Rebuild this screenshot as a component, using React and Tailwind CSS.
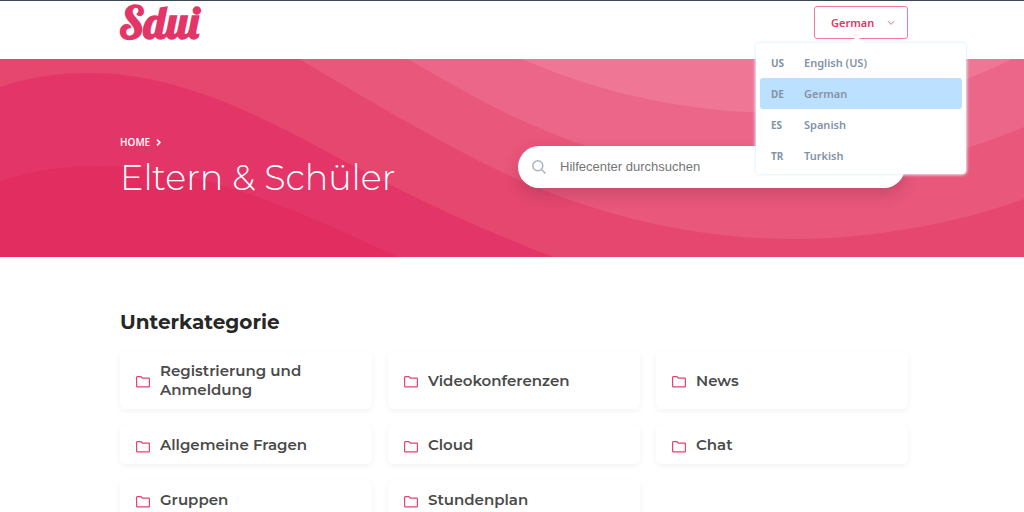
const languages = [
  { code: "US", name: "English (US)" },
  { code: "DE", name: "German", active: true },
  { code: "ES", name: "Spanish" },
  { code: "TR", name: "Turkish" },
];

const categories = [
  "Registrierung und Anmeldung",
  "Videokonferenzen",
  "News",
  "Allgemeine Fragen",
  "Cloud",
  "Chat",
  "Gruppen",
  "Stundenplan",
];

function FolderIcon() {
  return (
    <svg viewBox="0 0 14 12" className="mt-1 h-3 w-3.5 shrink-0" fill="none" stroke="#e4436f" strokeWidth="1.2" strokeLinejoin="round" aria-hidden="true">
      <path d="M.6 10.2V1.3Q.6.7 1.2.7H5L6.6 2.2h6.2q.6 0 .6.6v7.4q0 .6-.6.6H1.2q-.6 0-.6-.6Z" />
    </svg>
  );
}

function Waves() {
  return (
    <svg viewBox="0 0 1024 198" preserveAspectRatio="xMidYMid slice" className="absolute inset-0 h-full w-full" aria-hidden="true">
      <rect width="1024" height="198" fill="#f07696" />
      <path fill="#ec6689" d="M0 0H522C590 30 680 54 780 54C860 54 940 36 1012 0H1024V198H0Z" />
      <path fill="#e9577b" d="M0 0H408C440 19 475 39 512 57C600 98 690 121 785 121C870 121 950 98 1024 68V198H0Z" />
      <path fill="#e6476f" d="M0 0H299C365 39 440 84 512 118C600 157 695 180 792 180C870 180 955 165 1024 140V198H0Z" />
      <path fill="#e33567" d="M0 28C30 18 60 14 88 14C185 14 270 62 350 105C420 142 480 170 553 198H0Z" />
      <path fill="#e22d61" d="M0 122C30 112 65 107 97 107C205 107 305 155 398 198H0Z" />
    </svg>
  );
}

function LanguagePicker() {
  return (
    <div className="relative z-20 font-['Noto_Sans',sans-serif] text-[11px]">
      <button type="button" aria-haspopup="true" aria-expanded="true" className="flex h-[33px] w-[94px] items-center justify-between rounded-[3px] border border-[#ee7d9d] bg-white pt-px pr-3 pl-4 font-semibold text-[#e33567]">
        German
        <svg viewBox="0 0 8 8" className="size-2" fill="none" stroke="#e96a8c" aria-hidden="true">
          <path d="M1 2.2 4 5.4 7 2.2" />
        </svg>
      </button>
      <div className="absolute top-full left-1/2 mt-1 w-[210px] -translate-x-1/2 rounded-[4px] bg-white px-1 pt-1 pb-[3px] shadow-[0_0_3px_1px_#e3f2ff]">
        <svg viewBox="0 0 18 8" className="absolute -top-[7px] left-[92px] h-2 w-[18px]" fill="white" aria-hidden="true">
          <path d="M0 8Q2 7 7 2Q9 0 11 2Q16 7 18 8Z" />
        </svg>
        <ul>
          {languages.map(({ code, name, active }) => (
            <li key={code}>
              <a href="#" className={active ? "flex h-[31px] items-center rounded-[3px] bg-[#bce0ff] px-[11px] pt-px font-semibold text-[#8492a6]" : "flex h-[31px] items-center rounded-[3px] px-[11px] pt-px font-semibold text-[#8492a6]"}>
                <span className="w-[33px] text-[10px] font-bold">{code}</span>
                {name}
              </a>
            </li>
          ))}
        </ul>
      </div>
    </div>
  );
}

export default function App() {
  return (
    <div className="min-h-screen overflow-hidden bg-white font-['Montserrat',Inter,sans-serif]">
      <header className="border-t border-[#3c4858] bg-white">
        <div className="mx-auto flex h-[58px] max-w-[792px] items-start justify-between pl-[3px]">
          <a href="#" className="font-['Lobster','Liberation_Serif',serif] text-[44px] leading-[44px] font-bold text-[#e33567]">
            Sdui
          </a>
          <div className="pt-[5px]">
            <LanguagePicker />
          </div>
        </div>
      </header>

      <section className="relative">
        <Waves />
        <div className="relative mx-auto flex max-w-[792px] items-center justify-between pt-[75px] pr-[3px] pb-[57px] pl-1">
          <div>
            <nav aria-label="Breadcrumb" className="flex h-4 items-center gap-[6px] font-['Open_Sans',sans-serif] text-[10px] font-semibold text-white">
              <a href="#">HOME</a>
              <svg viewBox="0 0 5 7" className="h-[7px] w-[5px]" fill="none" stroke="white" strokeWidth="1.7" aria-hidden="true">
                <path d="M1 .6 3.9 3.5 1 6.4" />
              </svg>
            </nav>
            <h1 className="mt-1.5 text-[35px] leading-[44px] font-[350] text-white">Eltern &amp; Schüler</h1>
          </div>
          <div className="flex h-[42px] w-[387px] items-center rounded-full bg-white pl-3.5 shadow-[0_6px_16px_rgba(60,20,40,0.2)]">
            <svg viewBox="0 0 14 14" className="size-3.5 shrink-0" fill="none" stroke="#a9b4c2" strokeWidth="1.5" aria-hidden="true">
              <circle cx="5.8" cy="5.8" r="5" />
              <path d="m9.5 9.5 4 4" />
            </svg>
            <input type="search" aria-label="Hilfecenter durchsuchen" placeholder="Hilfecenter durchsuchen" className="ml-3.5 h-full min-w-0 flex-1 bg-transparent pb-0.5 font-['Liberation_Sans',sans-serif] text-[13px] text-[#333] outline-none placeholder:text-[#757575]" />
          </div>
        </div>
      </section>

      <main className="mx-auto max-w-[792px] pt-[51px] pl-1">
        <h2 className="text-xl leading-7 font-bold text-[#272727]">Unterkategorie</h2>
        <ul className="mt-[15px] grid grid-cols-3 gap-4">
          {categories.map((name) => (
            <li key={name}>
              <a href="#" className="flex h-full items-center gap-2.5 rounded-md bg-white px-4 py-2.5 text-[15px] leading-[19px] font-semibold text-[#4a4a4a] shadow-[0_2px_6px_rgba(0,0,0,0.05)]">
                <FolderIcon />
                <span className="max-w-[160px]">{name}</span>
              </a>
            </li>
          ))}
        </ul>
      </main>
    </div>
  );
}
